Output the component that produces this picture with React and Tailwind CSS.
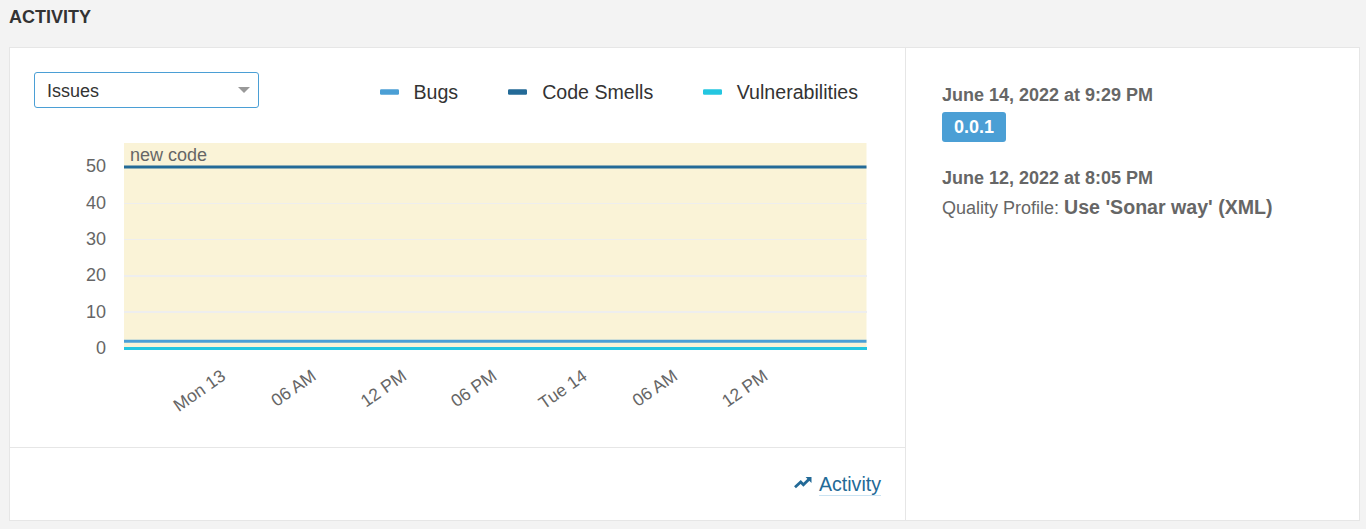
const legend = [
  { name: "Bugs", color: "#4b9fd5", gap: "" },
  { name: "Code Smells", color: "#236a97", gap: "ml-[50px]" },
  { name: "Vulnerabilities", color: "#24c6e0", gap: "ml-[49.5px]" },
];

const yTicks = [
  { label: "50", y: 167, textY: 172 },
  { label: "40", y: 203.5, textY: 209 },
  { label: "30", y: 239.5, textY: 245 },
  { label: "20", y: 276, textY: 281 },
  { label: "10", y: 312, textY: 318 },
  { label: "0", y: 348.5, textY: 354 },
];

const xTicks = [
  { label: "Mon 13", x: 224 },
  { label: "06 AM", x: 314.5 },
  { label: "12 PM", x: 404.8 },
  { label: "06 PM", x: 495.1 },
  { label: "Tue 14", x: 585.5 },
  { label: "06 AM", x: 675.8 },
  { label: "12 PM", x: 766.1 },
];

function Chart() {
  return (
    <svg
      className="block h-[310px] w-[847px] text-[18px]"
      viewBox="34 129 847 310"
      fill="#666666"
    >
      <rect x="124" y="143" width="742.5" height="205.5" fill="#faf3d7" />
      {yTicks.map((t) => (
        <g key={t.label}>
          <line
            x1="124"
            x2="866.5"
            y1={t.y}
            y2={t.y}
            stroke="#eeeeee"
            strokeWidth={t.label === "20" || t.label === "10" ? 2 : 1}
            shapeRendering="crispEdges"
          />
          <text x="106" y={t.textY} textAnchor="end">
            {t.label}
          </text>
        </g>
      ))}
      <text x="130" y="161">new code</text>
      <line x1="124" x2="866.5" y1="167" y2="167" stroke="#236a97" strokeWidth="3" />
      <line x1="124" x2="866.5" y1="341.2" y2="341.2" stroke="#4b9fd5" strokeWidth="3" />
      <line x1="124" x2="866.5" y1="348.5" y2="348.5" stroke="#24c6e0" strokeWidth="3" shapeRendering="crispEdges" />
      {xTicks.map((t) => (
        <text
          key={t.x}
          className="text-[17.6px]"
          x={t.x}
          y="374.5"
          dy="5"
          textAnchor="end"
          transform={`rotate(-35 ${t.x} 374.5)`}
        >
          {t.label}
        </text>
      ))}
    </svg>
  );
}

export default function App() {
  return (
    <div className="h-[529px] overflow-hidden bg-[#f3f3f3] pl-[9px] pr-[6px] font-['Liberation_Sans',sans-serif] text-[#333333]">
      <h2 className="h-[47px] pt-[5px] text-[18px] font-bold leading-6">ACTIVITY</h2>
      <div className="flex h-[474px] border border-[#e6e6e6] bg-white">
        <div className="flex w-[896px] flex-col border-r border-[#e6e6e6]">
          <div className="h-[400px] border-b border-[#e6e6e6] px-6 pt-6">
            <div className="flex h-9 items-center">
              <button className="flex h-9 w-[225px] items-center justify-between rounded-[3px] border border-[#4b9fd5] pl-3 pr-2 text-[18px]">
                <span className="pt-[2px]">Issues</span>
                <svg className="h-[6px] w-3" viewBox="0 0 12 6">
                  <path d="M0 0h12L6 6z" fill="#999999" />
                </svg>
              </button>
              <ul className="ml-[120.5px] flex pt-[2px] text-[19.6px] leading-[30px]">
                {legend.map((item) => (
                  <li key={item.name} className={`flex items-center whitespace-nowrap ${item.gap}`}>
                    <svg className="mr-[15px] mt-[2px] h-[6px] w-[19px]" viewBox="0 0 19 6">
                      <rect width="19" height="5.5" y=".3" rx="1.2" fill={item.color} />
                    </svg>
                    <span className="pt-[2px]">{item.name}</span>
                  </li>
                ))}
              </ul>
            </div>
            <div className="pt-[21px]">
              <Chart />
            </div>
          </div>
          <div className="flex flex-1 items-center justify-end pr-6 text-[#236a97]">
            <svg className="mb-1 mr-[7px] h-[13px] w-[18px]" viewBox="0 0 18 13" fill="none">
              <path d="M1 11.2 6.7 6l2.7 2.8 5.6-5.6" stroke="currentColor" strokeWidth="2.8" />
              <path d="M11.6 1h5.9v5.9z" fill="currentColor" />
            </svg>
            <a className="border-b border-[#cae3f2] text-[19.6px] leading-[22px]">Activity</a>
          </div>
        </div>
        <div className="flex-1 pl-9 pt-[35px] text-[18px] leading-6 text-[#666666]">
          <div className="font-bold">June 14, 2022 at 9:29 PM</div>
          <div className="mt-[5px] flex h-[30px] w-16 items-center justify-center rounded-[3px] bg-[#4b9fd5] font-bold text-white">
            0.0.1
          </div>
          <div className="mt-6 font-bold">June 12, 2022 at 8:05 PM</div>
          <div className="mt-[5px] whitespace-nowrap">
            Quality Profile: <strong className="text-[19.6px]">Use 'Sonar way' (XML)</strong>
          </div>
        </div>
      </div>
    </div>
  );
}
